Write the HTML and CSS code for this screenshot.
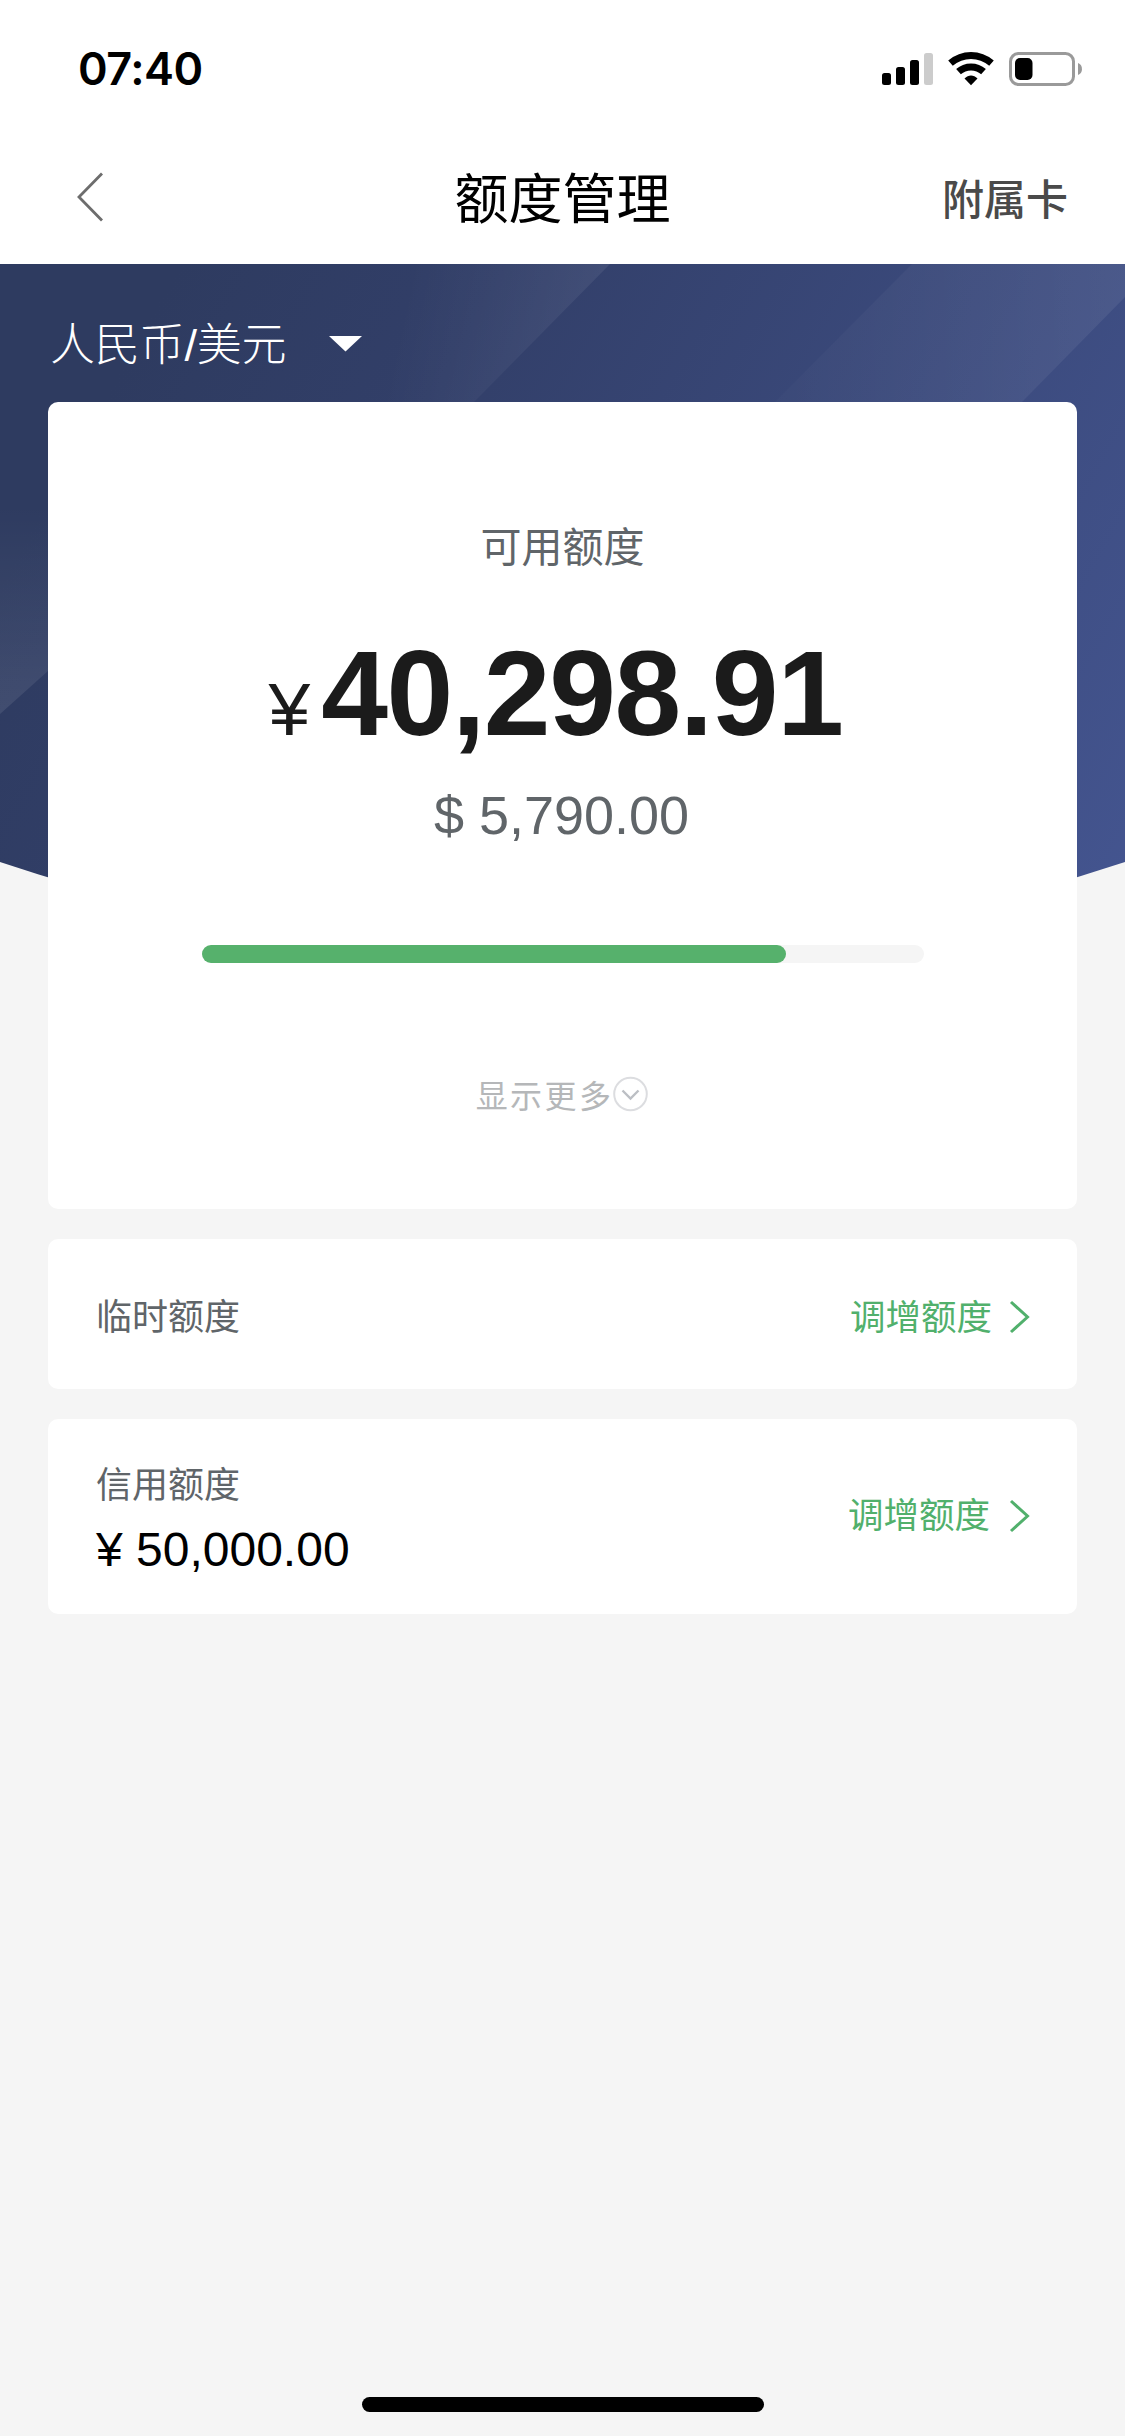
FILE: index.html
```html
<!DOCTYPE html>
<html lang="zh-CN">
<head>
<meta charset="utf-8">
<title>额度管理</title>
<link rel="stylesheet" href="styles.css">
</head>
<body>
<div class="screen">
  <div class="status">
    <span class="time">07:40</span>
    <svg class="status-icons" width="202" height="36" viewBox="0 0 202 36">
      <g transform="translate(1 1)">
        <rect x="0" y="21" width="9" height="12" rx="2.5"/>
        <rect x="14" y="15" width="9" height="18" rx="2.5"/>
        <rect x="28" y="8" width="9" height="25" rx="2.5"/>
        <rect x="42" y="1" width="9" height="32" rx="2.5" fill="#ccc"/>
        <g fill="none" stroke="#000" stroke-width="7">
          <path d="M68.5 11.2C80.5 .9 97.5 .9 109.5 11.2"/>
          <path d="M76.5 19.7C83.5 13.3 94.5 13.3 101.5 19.7"/>
        </g>
        <path d="M82.5 26.5C86.5 22.5 91.5 22.5 95.5 26.5L89 33.3Z"/>
        <rect x="128.5" y="1.5" width="63" height="31" rx="8" fill="none" stroke="#9a9a9a" stroke-width="3"/>
        <rect x="133" y="6" width="17.5" height="22" rx="5"/>
        <path d="M196 11C201.3 12.5 201.3 21.5 196 23Z" fill="#9a9a9a"/>
      </g>
    </svg>
  </div>
  <div class="nav">
    <svg class="back" width="28" height="50" viewBox="0 0 28 50"><path d="M26 1.5L3 25L26 48.5" fill="none" stroke="#6d6d6d" stroke-width="2.8"/></svg>
    <h1 class="title">额度管理</h1>
    <span class="nav-action">附属卡</span>
  </div>
  <div class="content">
    <svg class="hero-bg" width="1125" height="640" viewBox="0 0 1125 640">
      <defs>
        <linearGradient id="base" gradientUnits="userSpaceOnUse" x1="180" y1="0" x2="1180" y2="560">
          <stop offset="0" stop-color="#2e3b60"/><stop offset=".25" stop-color="#323f69"/><stop offset="1" stop-color="#445590"/>
        </linearGradient>
        <linearGradient id="ray" gradientUnits="userSpaceOnUse" x1="410" y1="0" x2="600" y2="40">
          <stop offset="0" stop-color="#fff" stop-opacity="0"/><stop offset="1" stop-color="#fff" stop-opacity=".07"/>
        </linearGradient>
        <linearGradient id="ray-wide" gradientUnits="userSpaceOnUse" x1="780" y1="0" x2="1125" y2="0">
          <stop offset="0" stop-color="#fff" stop-opacity=".015"/><stop offset="1" stop-color="#fff" stop-opacity=".07"/>
        </linearGradient>
        <linearGradient id="side" x1="0" y1="0" x2="0" y2="1">
          <stop offset="0" stop-color="#fff" stop-opacity="0"/><stop offset="1" stop-color="#fff" stop-opacity=".09"/>
        </linearGradient>
      </defs>
      <path d="M0 598Q562 786 1125 598V0H0Z" fill="url(#base)"/>
      <path d="M350 0H610L474 138H350Z" fill="url(#ray)"/>
      <path d="M912 0H1125V33L1022 138H775Z" fill="url(#ray-wide)"/>
      <path d="M0 240H48V407L0 450Z" fill="url(#side)"/>
    </svg>
    <div class="currency">
      <span>人民币/美元</span>
      <svg width="33" height="16" viewBox="0 0 33 16"><path d="M0 0H33L16.5 15.5Z" fill="#fff"/></svg>
    </div>
    <section class="card summary">
      <div class="label">可用额度</div>
      <div class="amount"><span class="yen">¥</span><span class="figure">40,298.91</span></div>
      <div class="usd">$ 5,790.00</div>
      <div class="bar"><div class="bar-fill"></div></div>
      <div class="more"><span>显示更多</span>
        <svg width="36" height="36" viewBox="0 0 36 36" fill="none"><circle cx="17.5" cy="18" r="16.3" stroke="#dcdde0" stroke-width="2"/><path d="M9.500 14.500L17.500 22.500L25.500 14.500" stroke="#bcbfc4" stroke-width="2.4"/></svg>
      </div>
    </section>
    <section class="card row row-temp">
      <span class="row-label">临时额度</span>
      <span class="link">调增额度</span>
      <svg width="22" height="34" viewBox="0 0 22 34"><path d="M2 2L18.5 17L2 32" fill="none" stroke="#51b06c" stroke-width="3"/></svg>
    </section>
    <section class="card row row-credit">
      <div class="credit"><span class="row-label">信用额度</span><span class="credit-value">¥ 50,000.00</span></div>
      <span class="link">调增额度</span>
      <svg width="22" height="34" viewBox="0 0 22 34"><path d="M2 2L18.5 17L2 32" fill="none" stroke="#51b06c" stroke-width="3"/></svg>
    </section>
  </div>
  <div class="home"></div>
</div>
</body>
</html>
```
FILE: styles.css
```css
* { box-sizing: border-box; }
body {
  margin: 0;
  background: #f5f5f5;
  font-family: "Liberation Sans", "Noto Sans CJK SC", sans-serif;
}
.screen {
  width: 1125px;
  height: 2436px;
  display: flex;
  flex-direction: column;
  align-items: center;
  overflow: hidden;
}
svg { display: block; flex: none; }
.status {
  width: 100%;
  height: 138px;
  padding: 0 42px 0 78px;
  background: #fff;
  display: flex;
  align-items: center;
  justify-content: space-between;
}
.time { font: 600 45px/54px Inter, sans-serif; letter-spacing: -0.5px; }
.nav {
  width: 100%;
  height: 126px;
  padding: 0 57px 8px 76px;
  background: #fff;
  display: grid;
  grid-template-columns: 1fr auto 1fr;
  align-items: center;
}
.title { margin: 6px 19px 0 0; font-size: 54px; line-height: 80px; font-weight: 400; color: #000; }
.nav-action { justify-self: end; padding-top: 7px; font-size: 42px; line-height: 60px; font-weight: 500; color: #4a4a4a; }
.back { margin-left: 0; }
.content {
  width: 100%;
  padding: 0 48px;
  display: flex;
  flex-direction: column;
  position: relative;
}
.hero-bg { position: absolute; left: 0; top: 0; z-index: -1; }
.currency {
  height: 138px;
  padding: 21px 0 0 2px;
  display: flex;
  align-items: center;
  gap: 43px;
  color: #fff;
  font-size: 45px;
  line-height: 60px;
  font-weight: 300;
  letter-spacing: -0.2px;
}
.currency span { padding-top: 5px; }
.card { background: #fff; border-radius: 10px; }
.summary {
  height: 807px;
  padding-top: 116px;
  display: flex;
  flex-direction: column;
  align-items: center;
}
.label { font-size: 41px; line-height: 60px; color: #606569; }
.amount {
  margin: 50px 14px 0 0;
  height: 130px;
  display: flex;
  align-items: baseline;
  color: #1b1b1b;
  line-height: 130px;
  gap: 11px;
}
.yen { font-size: 75px; }
.figure { font-size: 120px; font-weight: 700; letter-spacing: -1.4px; }
.usd { margin: 27px 2px 0 0; font-size: 54px; line-height: 60px; color: #606569; }
.bar {
  width: 722px;
  height: 18px;
  margin-top: 100px;
  border-radius: 9px;
  background: #f5f5f5;
}
.bar-fill { width: 584px; height: 18px; border-radius: 9px; background: #56b16c; }
.more {
  margin-top: 108px;
  display: flex;
  align-items: center;
  font-size: 32px;
  line-height: 46px;
  letter-spacing: 2.4px;
  color: #b5b7b9;
}
.more span { padding-top: 3px; margin-bottom: -3px; }
.row {
  margin-top: 30px;
  padding: 0 46px 0 48px;
  display: flex;
  align-items: center;
}
.row-temp { height: 150px; padding-top: 5px; }
.row-temp .row-label, .row-temp .link { padding-top: 3px; }
.row-credit { height: 195px; padding-bottom: 2px; }
.row-label { font-size: 36px; line-height: 54px; color: #606569; }
.credit { display: flex; flex-direction: column; padding-top: 8px; }
.credit-value { font-size: 48px; line-height: 60px; margin-top: 7px; color: #000; }
.link { margin: 0 17px 0 auto; font-size: 35.5px; line-height: 54px; color: #51b06c; }
.row-credit .link { margin-right: 19px; }
.home {
  width: 402px;
  height: 15px;
  margin: auto 0 24px;
  border-radius: 8px;
  background: #000;
}
```
